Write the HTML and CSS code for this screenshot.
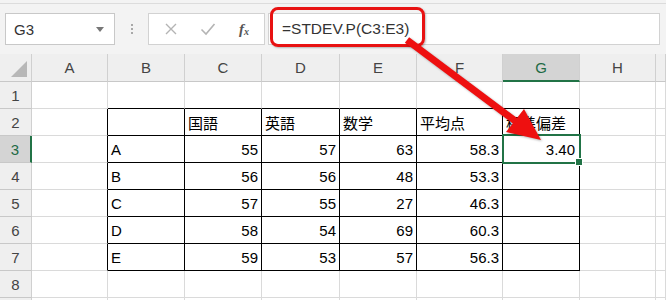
FILE: index.html
```html
<!DOCTYPE html>
<html lang="ja">
<head>
  <meta charset="UTF-8" />
  <meta name="viewport" content="width=device-width, initial-scale=1.0" />
  <title>STDEV.P</title>
  <link rel="stylesheet" href="styles.css">
</head>
<body>
  <div class="bar">
    <div class="namebox">G3<span class="drop"></span></div>
    <div class="dots"><i></i><i></i><i></i></div>
    <div class="btns">
      <svg class="ico" width="14" height="14" viewBox="0 0 14 14"><path d="M2 2 L12 12 M12 2 L2 12" stroke="#b4b4b4" stroke-width="1.4" fill="none"/></svg>
      <svg class="ico" width="16" height="14" viewBox="0 0 16 14"><path d="M1.5 7.5 L6 12 L14.5 2" stroke="#b4b4b4" stroke-width="1.6" fill="none"/></svg>
      <span class="fx">f<sub>x</sub></span>
    </div>
    <div class="formula">=STDEV.P(C3:E3)<div class="hl"></div></div>
  </div>

  <div class="sheet">
    <div class="h corner"></div><div class="h">A</div><div class="h">B</div><div class="h">C</div><div class="h">D</div><div class="h">E</div><div class="h">F</div><div class="h sel">G</div><div class="h">H</div><div class="h"></div>

    <div class="rh">1</div><div class="c"></div><div class="c tt"></div><div class="c tt"></div><div class="c tt"></div><div class="c tt"></div><div class="c tt"></div><div class="c tt"></div><div class="c"></div><div class="c"></div>
    <div class="rh">2</div><div class="c tl"></div><div class="c t"></div><div class="c t">国語</div><div class="c t">英語</div><div class="c t">数学</div><div class="c t">平均点</div><div class="c t">標準偏差</div><div class="c"></div><div class="c"></div>
    <div class="rh sel">3</div><div class="c tl"></div><div class="c t">A</div><div class="c t n">55</div><div class="c t n">57</div><div class="c t n">63</div><div class="c t n">58.3</div><div class="c t n active">3.40</div><div class="c"></div><div class="c"></div>
    <div class="rh">4</div><div class="c tl"></div><div class="c t">B</div><div class="c t n">56</div><div class="c t n">56</div><div class="c t n">48</div><div class="c t n">53.3</div><div class="c t"></div><div class="c"></div><div class="c"></div>
    <div class="rh">5</div><div class="c tl"></div><div class="c t">C</div><div class="c t n">57</div><div class="c t n">55</div><div class="c t n">27</div><div class="c t n">46.3</div><div class="c t"></div><div class="c"></div><div class="c"></div>
    <div class="rh">6</div><div class="c tl"></div><div class="c t">D</div><div class="c t n">58</div><div class="c t n">54</div><div class="c t n">69</div><div class="c t n">60.3</div><div class="c t"></div><div class="c"></div><div class="c"></div>
    <div class="rh">7</div><div class="c tl"></div><div class="c t">E</div><div class="c t n">59</div><div class="c t n">53</div><div class="c t n">57</div><div class="c t n">56.3</div><div class="c t"></div><div class="c"></div><div class="c"></div>
    <div class="rh">8</div><div class="c"></div><div class="c"></div><div class="c"></div><div class="c"></div><div class="c"></div><div class="c"></div><div class="c"></div><div class="c"></div><div class="c"></div>
    <div class="rh"></div><div class="c"></div><div class="c"></div><div class="c"></div><div class="c"></div><div class="c"></div><div class="c"></div><div class="c"></div><div class="c"></div><div class="c"></div>
  </div>

  <!-- 数式からG3への矢印 -->
  <svg class="arrow" width="666" height="300" viewBox="0 0 666 300">
    <line x1="407" y1="40" x2="518" y2="123" stroke="#ee1010" stroke-width="7"/>
    <polygon points="541,140 506,132 524,109" fill="#ee1010"/>
  </svg>
</body>
</html>
```

FILE: styles.css
```css
body {
  margin: 0;
  font-family: "Liberation Sans", "Noto Sans CJK JP", sans-serif;
  background: #f3f3f3;
  width: 666px;
  height: 300px;
  overflow: hidden;
  position: relative;
}
.bar {
  margin-top: 3px;
  border-top: 1px solid #dcdcdc;
  padding: 9px 6px 9px 5px;
  display: flex;
  align-items: stretch;
  height: 32px;
}
.namebox {
  width: 110px;
  box-sizing: border-box;
  background: #fff;
  border: 1px solid #c8c8c8;
  font-size: 15px;
  color: #333;
  padding: 0 8px;
  display: flex;
  align-items: center;
  justify-content: space-between;
}
.drop {
  width: 0;
  height: 0;
  border-left: 4px solid transparent;
  border-right: 4px solid transparent;
  border-top: 5px solid #777;
  margin-right: 2px;
}
.dots {
  width: 33px;
  display: flex;
  flex-direction: column;
  align-items: center;
  justify-content: center;
  gap: 2px;
}
.dots i {
  width: 2px;
  height: 2px;
  background: #a8a8a8;
}
.btns {
  width: 117px;
  box-sizing: border-box;
  background: #fff;
  border: 1px solid #d2d2d2;
  display: flex;
  align-items: center;
  padding: 0 0 0 15px;
  gap: 22px;
}
.fx {
  font-family: "Liberation Serif", serif;
  font-style: italic;
  font-weight: bold;
  font-size: 15px;
  color: #555;
  margin-left: 1px;
}
.fx sub {
  font-size: 10px;
  vertical-align: baseline;
  position: relative;
  top: 1px;
}
.formula {
  flex: 1;
  margin-left: 3px;
  background: #fff;
  border: 1px solid #d2d2d2;
  font-size: 15.5px;
  color: #333;
  padding-left: 13px;
  display: flex;
  align-items: center;
  position: relative;
}
.hl {
  position: absolute;
  left: 1px;
  top: -7px;
  width: 155px;
  height: 40px;
  box-sizing: border-box;
  border: 3px solid #e81212;
  border-radius: 8px;
  box-shadow: 1px 1px 2px rgba(0, 0, 0, 0.25);
}
.sheet {
  display: grid;
  grid-template-columns: 32px 76px 77px 77px 78px 77px 86px 77px 76px 10px;
  grid-template-rows: 28px repeat(9, 27px);
  background: #fff;
  font-size: 15px;
}
.sheet > div {
  box-sizing: border-box;
  display: flex;
  align-items: center;
  white-space: nowrap;
  overflow: hidden;
}
.h, .rh {
  background: #efefef;
  border-right: 1px solid #d0d0d0;
  border-bottom: 1px solid #c8c8c8;
  justify-content: center;
  color: #444;
}
.h.sel {
  background: #d4d4d4;
  border-bottom: 2px solid #217346;
  color: #1e6b45;
}
.rh.sel {
  background: #d4d4d4;
  border-right: 2px solid #217346;
  color: #1e6b45;
}
.corner {
  position: relative;
}
.corner::after {
  content: "";
  position: absolute;
  right: 4px;
  bottom: 4px;
  width: 16px;
  height: 16px;
  background: #b8b8b8;
  clip-path: polygon(100% 0, 100% 100%, 0 100%);
}
.c {
  border-right: 1px solid #dadada;
  border-bottom: 1px solid #dadada;
  padding: 0 3px;
  color: #000;
}
.c.t {
  border-right-color: #000;
  border-bottom-color: #000;
}
.c.tl { border-right-color: #000; }
.c.tt { border-bottom-color: #000; }
.n { justify-content: flex-end; }
.active {
  position: relative;
  overflow: visible !important;
  padding-right: 4px;
}
.active::after {
  content: "";
  position: absolute;
  left: -1px;
  top: -2px;
  right: -2px;
  bottom: -2px;
  border: 2px solid #217346;
}
.active::before {
  content: "";
  position: absolute;
  right: -4px;
  bottom: -4px;
  width: 6px;
  height: 6px;
  background: #217346;
  border: 1px solid #fff;
  z-index: 2;
}
.arrow {
  position: absolute;
  left: 0;
  top: 0;
  pointer-events: none;
  filter: drop-shadow(1px 1px 1px rgba(0, 0, 0, 0.3));
}
```
